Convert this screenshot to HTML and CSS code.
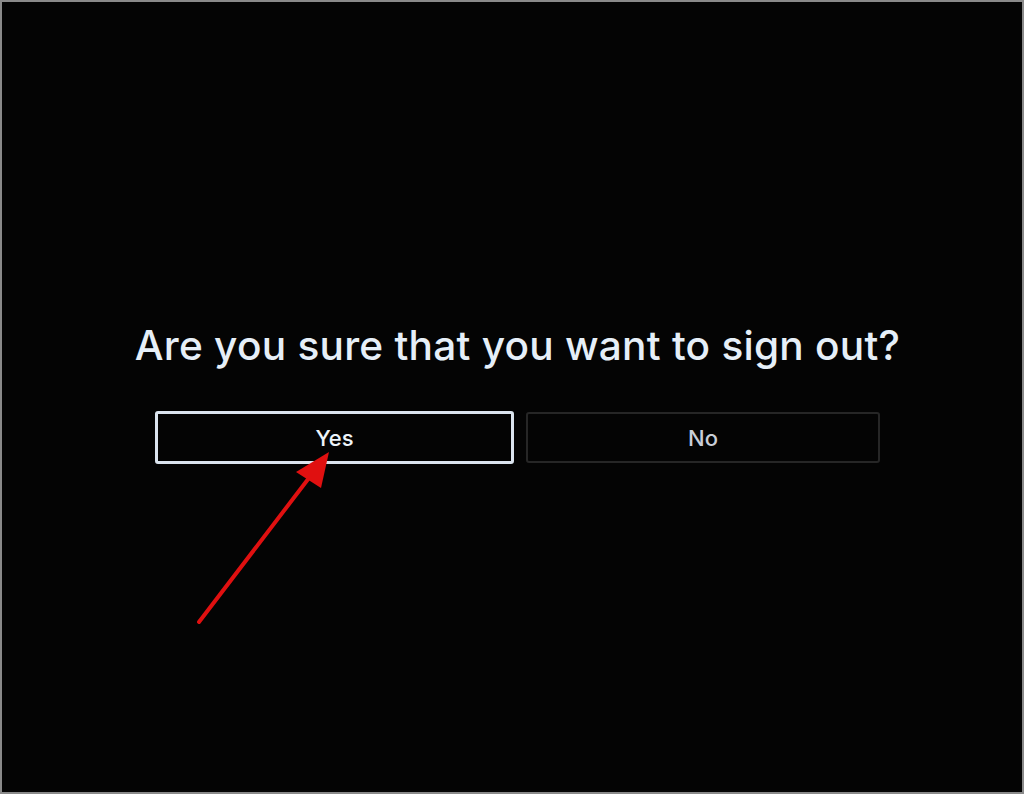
FILE: index.html
```html
<!DOCTYPE html>
<html>
<head>
<meta charset="utf-8">
<link rel="stylesheet" href="styles.css">
</head>
<body>
<div class="screen">
  <div class="dialog">
    <h1 class="title">Are you sure that you want to sign out?</h1>
    <div class="buttons">
      <div class="btn btn-focus">Yes</div>
      <div class="btn">No</div>
    </div>
  </div>
  <svg class="arrow" width="1024" height="794" viewBox="0 0 1024 794">
    <line x1="199" y1="622" x2="312" y2="474" stroke="#e01010" stroke-width="4" stroke-linecap="round"/>
    <polygon points="329,452 296,472 321,488" fill="#e01010"/>
  </svg>
</div>
</body>
</html>
```
FILE: styles.css
```css
html, body {
  margin: 0;
  padding: 0;
  background: #808080;
}
.screen {
  position: relative;
  box-sizing: border-box;
  width: 1024px;
  height: 794px;
  border: 2px solid #8a8a8a;
  background: #040404;
  display: flex;
  justify-content: center;
  padding-left: 11px;
  padding-top: 314px;
  font-family: Inter, "Noto Sans", sans-serif;
}
.dialog {
  display: flex;
  flex-direction: column;
  align-items: center;
}
.title {
  margin: 0;
  font-size: 40.6px;
  font-weight: 500;
  color: #e6eff8;
  letter-spacing: 0.25px;
  line-height: 60px;
}
.buttons {
  margin-top: 36px;
  display: flex;
  gap: 12px;
}
.btn {
  box-sizing: border-box;
  width: 354px;
  height: 51px;
  border: 2px solid #262626;
  border-radius: 3px;
  display: flex;
  align-items: center;
  justify-content: center;
  color: #c9ced8;
  font-size: 22px;
  font-weight: 500;
}
.btn-focus {
  width: 359px;
  height: 53px;
  margin-top: -1px;
  border: 3px solid #dbe4ee;
  color: #eef4fa;
}
.arrow {
  position: absolute;
  left: -2px;
  top: -2px;
}
```
